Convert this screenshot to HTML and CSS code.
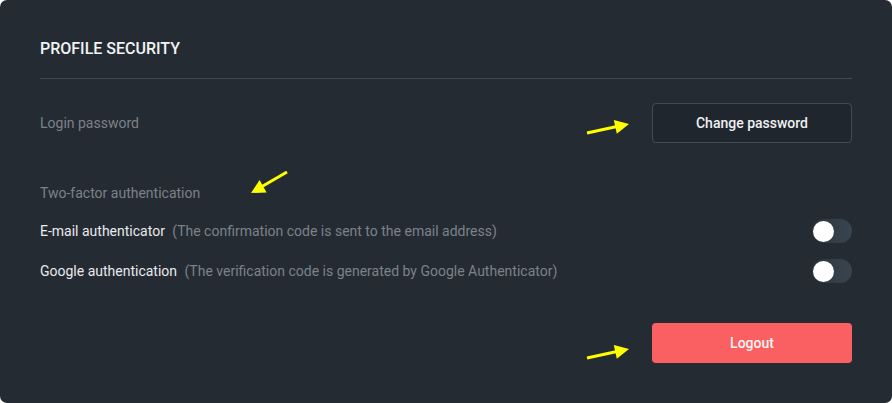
FILE: index.html
```html
<!DOCTYPE html>
<html>
<head>
<meta charset="utf-8">
<link rel="stylesheet" href="styles.css">
</head>
<body>
<div class="panel">
  <h2 class="title">PROFILE SECURITY</h2>
  <div class="divider"></div>
  <div class="row row-pass">
    <span class="muted">Login password</span>
    <button class="btn btn-outline">Change password</button>
  </div>
  <div class="section-label muted">Two-factor authentication</div>
  <div class="row row-toggle">
    <span class="label">E-mail authenticator <span class="hint">(The confirmation code is sent to the email address)</span></span>
    <span class="toggle"><span class="knob"></span></span>
  </div>
  <div class="row row-toggle">
    <span class="label">Google authentication <span class="hint">(The verification code is generated by Google Authenticator)</span></span>
    <span class="toggle"><span class="knob"></span></span>
  </div>
  <div class="row row-logout">
    <button class="btn btn-danger">Logout</button>
  </div>
  <svg class="arrows" width="892" height="403" viewBox="0 0 892 403">
    <g stroke="#ffff00" stroke-width="3" fill="#ffff00" stroke-linecap="butt">
      <line x1="587" y1="133" x2="617" y2="126.5"/>
      <polygon points="629,124 616.8,133.7 613.8,120.1" stroke="none"/>
      <line x1="287" y1="172" x2="262" y2="186.5"/>
      <polygon points="251,193 266.6,192.5 259.6,179.9" stroke="none"/>
      <line x1="587" y1="358" x2="617" y2="351.5"/>
      <polygon points="629,349 616.8,358.7 613.8,345.1" stroke="none"/>
    </g>
  </svg>
</div>
</body>
</html>
```

FILE: styles.css
```css
html, body {
  margin: 0;
  padding: 0;
  background: #ffffff;
}
body {
  font-family: Roboto, "Liberation Sans", sans-serif;
}
.panel {
  position: relative;
  box-sizing: border-box;
  width: 892px;
  height: 403px;
  background: #252b33;
  border-radius: 7px;
  padding: 40px 40px 40px 40px;
  display: flex;
  flex-direction: column;
}
.title {
  margin: 0;
  font-size: 16px;
  line-height: 18px;
  font-weight: 500;
  color: #f1f3f5;
  letter-spacing: 0;
}
.divider {
  height: 1px;
  background: #3f4c58;
  margin-top: 20px;
}
.row {
  display: flex;
  align-items: center;
  justify-content: space-between;
}
.row-pass {
  margin-top: 24px;
  height: 40px;
}
.muted {
  color: #7c828a;
  font-size: 14px;
  line-height: 20px;
}
.section-label {
  margin-top: 40px;
}
.row-toggle {
  margin-top: 16px;
  height: 24px;
}
.row-toggle + .row-toggle {
  margin-top: 16px;
}
.label {
  color: #e8eaed;
  font-size: 14px;
  line-height: 20px;
}
.hint {
  color: #7c828a;
  margin-left: 4px;
}
.toggle {
  width: 40px;
  height: 24px;
  border-radius: 12px;
  background: linear-gradient(90deg, #2d3640 0%, #38444f 100%);
  display: flex;
  align-items: center;
  padding-left: 1px;
  box-sizing: border-box;
}
.knob {
  width: 21px;
  height: 21px;
  border-radius: 50%;
  background: #ffffff;
}
.btn {
  width: 200px;
  height: 40px;
  border-radius: 4px;
  font-family: Roboto, "Liberation Sans", sans-serif;
  font-size: 14px;
  font-weight: 500;
  cursor: pointer;
}
.btn-outline {
  background: #20262d;
  border: 1px solid #414c56;
  color: #eef0f2;
}
.btn-danger {
  background: #fa5f62;
  border: none;
  color: #fff4f4;
}
.row-logout {
  margin-top: 40px;
  justify-content: flex-end;
}
.arrows {
  position: absolute;
  left: 0;
  top: 0;
  pointer-events: none;
}
```
